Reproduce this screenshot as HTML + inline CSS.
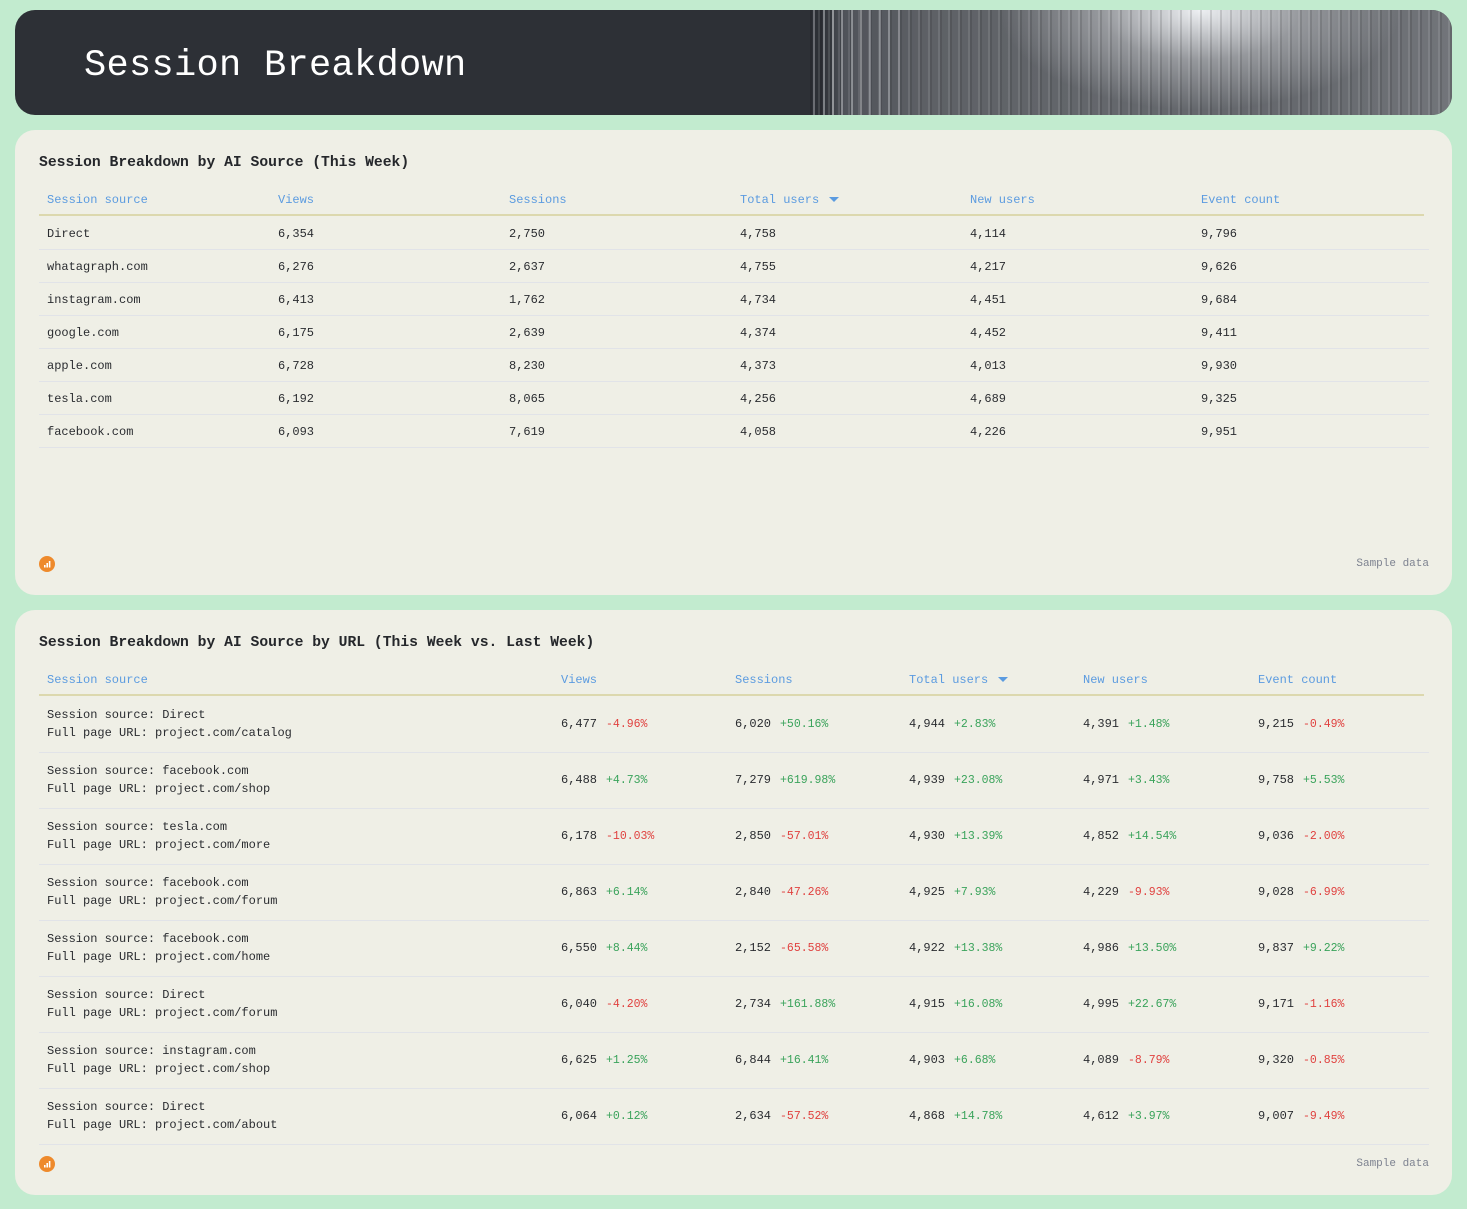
<!DOCTYPE html>
<html><head><meta charset="utf-8">
<style>
*{margin:0;padding:0;box-sizing:border-box}
body{width:1467px;height:1209px;background:#c2ebcf;font-family:"Liberation Mono",monospace;position:relative;overflow:hidden;color:#2a2c30}
.hdr{position:absolute;left:15px;top:10px;width:1437px;height:105px;background:#2d3036;border-radius:20px;overflow:hidden}
.hdr h1{position:absolute;left:69px;top:35px;font-size:37px;font-weight:normal;color:#fff;letter-spacing:0.3px}
.band{position:absolute;left:795px;top:0;width:642px;height:105px;
background:
repeating-linear-gradient(90deg,rgba(0,0,0,0.12) 0 2px,rgba(255,255,255,0.0) 2px 8px,rgba(255,255,255,0.10) 8px 10px),
radial-gradient(ellipse 200px 100px at 390px 0px,rgba(245,247,250,0.95),rgba(190,192,196,0.55) 50%,rgba(100,103,108,0) 100%),
linear-gradient(90deg,#2d3036 0,#2d3036 12px,#50535a 35px,#5e6166 120px,#64676c 300px,#66696e 500px,#72757a 642px);}
.band .l{position:absolute;top:0;bottom:0;width:2px;background:#c9cbcf}
.card{position:absolute;left:15px;width:1437px;background:#efefe6;border-radius:20px}
.t{position:absolute;left:24px;font-size:14.7px;font-weight:bold;color:#25272b}
.th{position:absolute;font-size:12px;color:#5b9be0}
.hl{position:absolute;left:24px;width:1385px;height:2px;background:#dcd8ae}
.rl{position:absolute;left:24px;width:1390px;height:1px;background:#e1e3e8}
.c{position:absolute;font-size:12px;color:#2a2c30;white-space:nowrap}
.c2{position:absolute;font-size:12px;color:#2a2c30;white-space:nowrap;line-height:18px}
.g{color:#3aa35b;font-size:11.5px;margin-left:9px}
.r{color:#e0413f;font-size:11.5px;margin-left:9px}
.sd{position:absolute;right:23px;font-size:11px;color:#7d8290}
.ic{position:absolute;left:24px;width:16px;height:16px;border-radius:50%;background:#ee8a2c}
.tri{display:inline-block;width:0;height:0;border-left:5px solid transparent;border-right:5px solid transparent;border-top:5px solid #5b9be0;margin-left:10px;vertical-align:1px}
</style></head><body>
<div class="hdr"><h1>Session Breakdown</h1>
<div class="band">
<div class="l" style="left:3px;opacity:.4"></div><div class="l" style="left:13px;opacity:.5"></div><div class="l" style="left:22px;opacity:.6"></div><div class="l" style="left:31px;opacity:.5"></div><div class="l" style="left:41px;opacity:.5"></div><div class="l" style="left:50px;opacity:.45"></div><div class="l" style="left:59px;opacity:.4"></div><div class="l" style="left:69px;opacity:.4"></div><div class="l" style="left:78px;opacity:.35"></div><div class="l" style="left:88px;opacity:.3"></div>
</div></div>

<div class="card" style="top:130px;height:465px">
<div class="t" style="top:25px">Session Breakdown by AI Source (This Week)</div>
<div class="th" style="left:32px;top:63px">Session source</div>
<div class="th" style="left:263px;top:63px">Views</div>
<div class="th" style="left:494px;top:63px">Sessions</div>
<div class="th" style="left:725px;top:63px">Total users<span class="tri"></span></div>
<div class="th" style="left:955px;top:63px">New users</div>
<div class="th" style="left:1186px;top:63px">Event count</div>
<div class="hl" style="top:84px"></div>
<div class="c" style="left:32px;top:97px">Direct</div><div class="c" style="left:263px;top:97px">6,354</div><div class="c" style="left:494px;top:97px">2,750</div><div class="c" style="left:725px;top:97px">4,758</div><div class="c" style="left:955px;top:97px">4,114</div><div class="c" style="left:1186px;top:97px">9,796</div>
<div class="rl" style="top:119px"></div>
<div class="c" style="left:32px;top:130px">whatagraph.com</div><div class="c" style="left:263px;top:130px">6,276</div><div class="c" style="left:494px;top:130px">2,637</div><div class="c" style="left:725px;top:130px">4,755</div><div class="c" style="left:955px;top:130px">4,217</div><div class="c" style="left:1186px;top:130px">9,626</div>
<div class="rl" style="top:152px"></div>
<div class="c" style="left:32px;top:163px">instagram.com</div><div class="c" style="left:263px;top:163px">6,413</div><div class="c" style="left:494px;top:163px">1,762</div><div class="c" style="left:725px;top:163px">4,734</div><div class="c" style="left:955px;top:163px">4,451</div><div class="c" style="left:1186px;top:163px">9,684</div>
<div class="rl" style="top:185px"></div>
<div class="c" style="left:32px;top:196px">google.com</div><div class="c" style="left:263px;top:196px">6,175</div><div class="c" style="left:494px;top:196px">2,639</div><div class="c" style="left:725px;top:196px">4,374</div><div class="c" style="left:955px;top:196px">4,452</div><div class="c" style="left:1186px;top:196px">9,411</div>
<div class="rl" style="top:218px"></div>
<div class="c" style="left:32px;top:229px">apple.com</div><div class="c" style="left:263px;top:229px">6,728</div><div class="c" style="left:494px;top:229px">8,230</div><div class="c" style="left:725px;top:229px">4,373</div><div class="c" style="left:955px;top:229px">4,013</div><div class="c" style="left:1186px;top:229px">9,930</div>
<div class="rl" style="top:251px"></div>
<div class="c" style="left:32px;top:262px">tesla.com</div><div class="c" style="left:263px;top:262px">6,192</div><div class="c" style="left:494px;top:262px">8,065</div><div class="c" style="left:725px;top:262px">4,256</div><div class="c" style="left:955px;top:262px">4,689</div><div class="c" style="left:1186px;top:262px">9,325</div>
<div class="rl" style="top:284px"></div>
<div class="c" style="left:32px;top:295px">facebook.com</div><div class="c" style="left:263px;top:295px">6,093</div><div class="c" style="left:494px;top:295px">7,619</div><div class="c" style="left:725px;top:295px">4,058</div><div class="c" style="left:955px;top:295px">4,226</div><div class="c" style="left:1186px;top:295px">9,951</div>
<div class="rl" style="top:317px"></div>
<div class="ic" style="top:426px"><svg width="16" height="16" viewBox="0 0 16 16"><rect x="5" y="9" width="1.6" height="2.5" fill="#fff"/><rect x="7.4" y="7" width="1.6" height="4.5" fill="#fff"/><rect x="9.8" y="5" width="1.6" height="6.5" fill="#fff"/></svg></div>
<div class="sd" style="top:428px">Sample data</div>
</div>

<div class="card" style="top:610px;height:585px">
<div class="t" style="top:25px">Session Breakdown by AI Source by URL (This Week vs. Last Week)</div>
<div class="th" style="left:32px;top:63px">Session source</div>
<div class="th" style="left:546px;top:63px">Views</div>
<div class="th" style="left:720px;top:63px">Sessions</div>
<div class="th" style="left:894px;top:63px">Total users<span class="tri"></span></div>
<div class="th" style="left:1068px;top:63px">New users</div>
<div class="th" style="left:1243px;top:63px">Event count</div>
<div class="hl" style="top:84px"></div>

<div class="c2" style="left:32px;top:96px">Session source: Direct<br>Full page URL: project.com/catalog</div>
<div class="c" style="left:546px;top:107px">6,477<span class="r">-4.96%</span></div><div class="c" style="left:720px;top:107px">6,020<span class="g">+50.16%</span></div><div class="c" style="left:894px;top:107px">4,944<span class="g">+2.83%</span></div><div class="c" style="left:1068px;top:107px">4,391<span class="g">+1.48%</span></div><div class="c" style="left:1243px;top:107px">9,215<span class="r">-0.49%</span></div>
<div class="rl" style="top:142px"></div>

<div class="c2" style="left:32px;top:152px">Session source: facebook.com<br>Full page URL: project.com/shop</div>
<div class="c" style="left:546px;top:163px">6,488<span class="g">+4.73%</span></div><div class="c" style="left:720px;top:163px">7,279<span class="g">+619.98%</span></div><div class="c" style="left:894px;top:163px">4,939<span class="g">+23.08%</span></div><div class="c" style="left:1068px;top:163px">4,971<span class="g">+3.43%</span></div><div class="c" style="left:1243px;top:163px">9,758<span class="g">+5.53%</span></div>
<div class="rl" style="top:198px"></div>

<div class="c2" style="left:32px;top:208px">Session source: tesla.com<br>Full page URL: project.com/more</div>
<div class="c" style="left:546px;top:219px">6,178<span class="r">-10.03%</span></div><div class="c" style="left:720px;top:219px">2,850<span class="r">-57.01%</span></div><div class="c" style="left:894px;top:219px">4,930<span class="g">+13.39%</span></div><div class="c" style="left:1068px;top:219px">4,852<span class="g">+14.54%</span></div><div class="c" style="left:1243px;top:219px">9,036<span class="r">-2.00%</span></div>
<div class="rl" style="top:254px"></div>

<div class="c2" style="left:32px;top:264px">Session source: facebook.com<br>Full page URL: project.com/forum</div>
<div class="c" style="left:546px;top:275px">6,863<span class="g">+6.14%</span></div><div class="c" style="left:720px;top:275px">2,840<span class="r">-47.26%</span></div><div class="c" style="left:894px;top:275px">4,925<span class="g">+7.93%</span></div><div class="c" style="left:1068px;top:275px">4,229<span class="r">-9.93%</span></div><div class="c" style="left:1243px;top:275px">9,028<span class="r">-6.99%</span></div>
<div class="rl" style="top:310px"></div>

<div class="c2" style="left:32px;top:320px">Session source: facebook.com<br>Full page URL: project.com/home</div>
<div class="c" style="left:546px;top:331px">6,550<span class="g">+8.44%</span></div><div class="c" style="left:720px;top:331px">2,152<span class="r">-65.58%</span></div><div class="c" style="left:894px;top:331px">4,922<span class="g">+13.38%</span></div><div class="c" style="left:1068px;top:331px">4,986<span class="g">+13.50%</span></div><div class="c" style="left:1243px;top:331px">9,837<span class="g">+9.22%</span></div>
<div class="rl" style="top:366px"></div>

<div class="c2" style="left:32px;top:376px">Session source: Direct<br>Full page URL: project.com/forum</div>
<div class="c" style="left:546px;top:387px">6,040<span class="r">-4.20%</span></div><div class="c" style="left:720px;top:387px">2,734<span class="g">+161.88%</span></div><div class="c" style="left:894px;top:387px">4,915<span class="g">+16.08%</span></div><div class="c" style="left:1068px;top:387px">4,995<span class="g">+22.67%</span></div><div class="c" style="left:1243px;top:387px">9,171<span class="r">-1.16%</span></div>
<div class="rl" style="top:422px"></div>

<div class="c2" style="left:32px;top:432px">Session source: instagram.com<br>Full page URL: project.com/shop</div>
<div class="c" style="left:546px;top:443px">6,625<span class="g">+1.25%</span></div><div class="c" style="left:720px;top:443px">6,844<span class="g">+16.41%</span></div><div class="c" style="left:894px;top:443px">4,903<span class="g">+6.68%</span></div><div class="c" style="left:1068px;top:443px">4,089<span class="r">-8.79%</span></div><div class="c" style="left:1243px;top:443px">9,320<span class="r">-0.85%</span></div>
<div class="rl" style="top:478px"></div>

<div class="c2" style="left:32px;top:488px">Session source: Direct<br>Full page URL: project.com/about</div>
<div class="c" style="left:546px;top:499px">6,064<span class="g">+0.12%</span></div><div class="c" style="left:720px;top:499px">2,634<span class="r">-57.52%</span></div><div class="c" style="left:894px;top:499px">4,868<span class="g">+14.78%</span></div><div class="c" style="left:1068px;top:499px">4,612<span class="g">+3.97%</span></div><div class="c" style="left:1243px;top:499px">9,007<span class="r">-9.49%</span></div>
<div class="rl" style="top:534px"></div>

<div class="ic" style="top:546px"><svg width="16" height="16" viewBox="0 0 16 16"><rect x="5" y="9" width="1.6" height="2.5" fill="#fff"/><rect x="7.4" y="7" width="1.6" height="4.5" fill="#fff"/><rect x="9.8" y="5" width="1.6" height="6.5" fill="#fff"/></svg></div>
<div class="sd" style="top:548px">Sample data</div>
</div>
</body></html>
